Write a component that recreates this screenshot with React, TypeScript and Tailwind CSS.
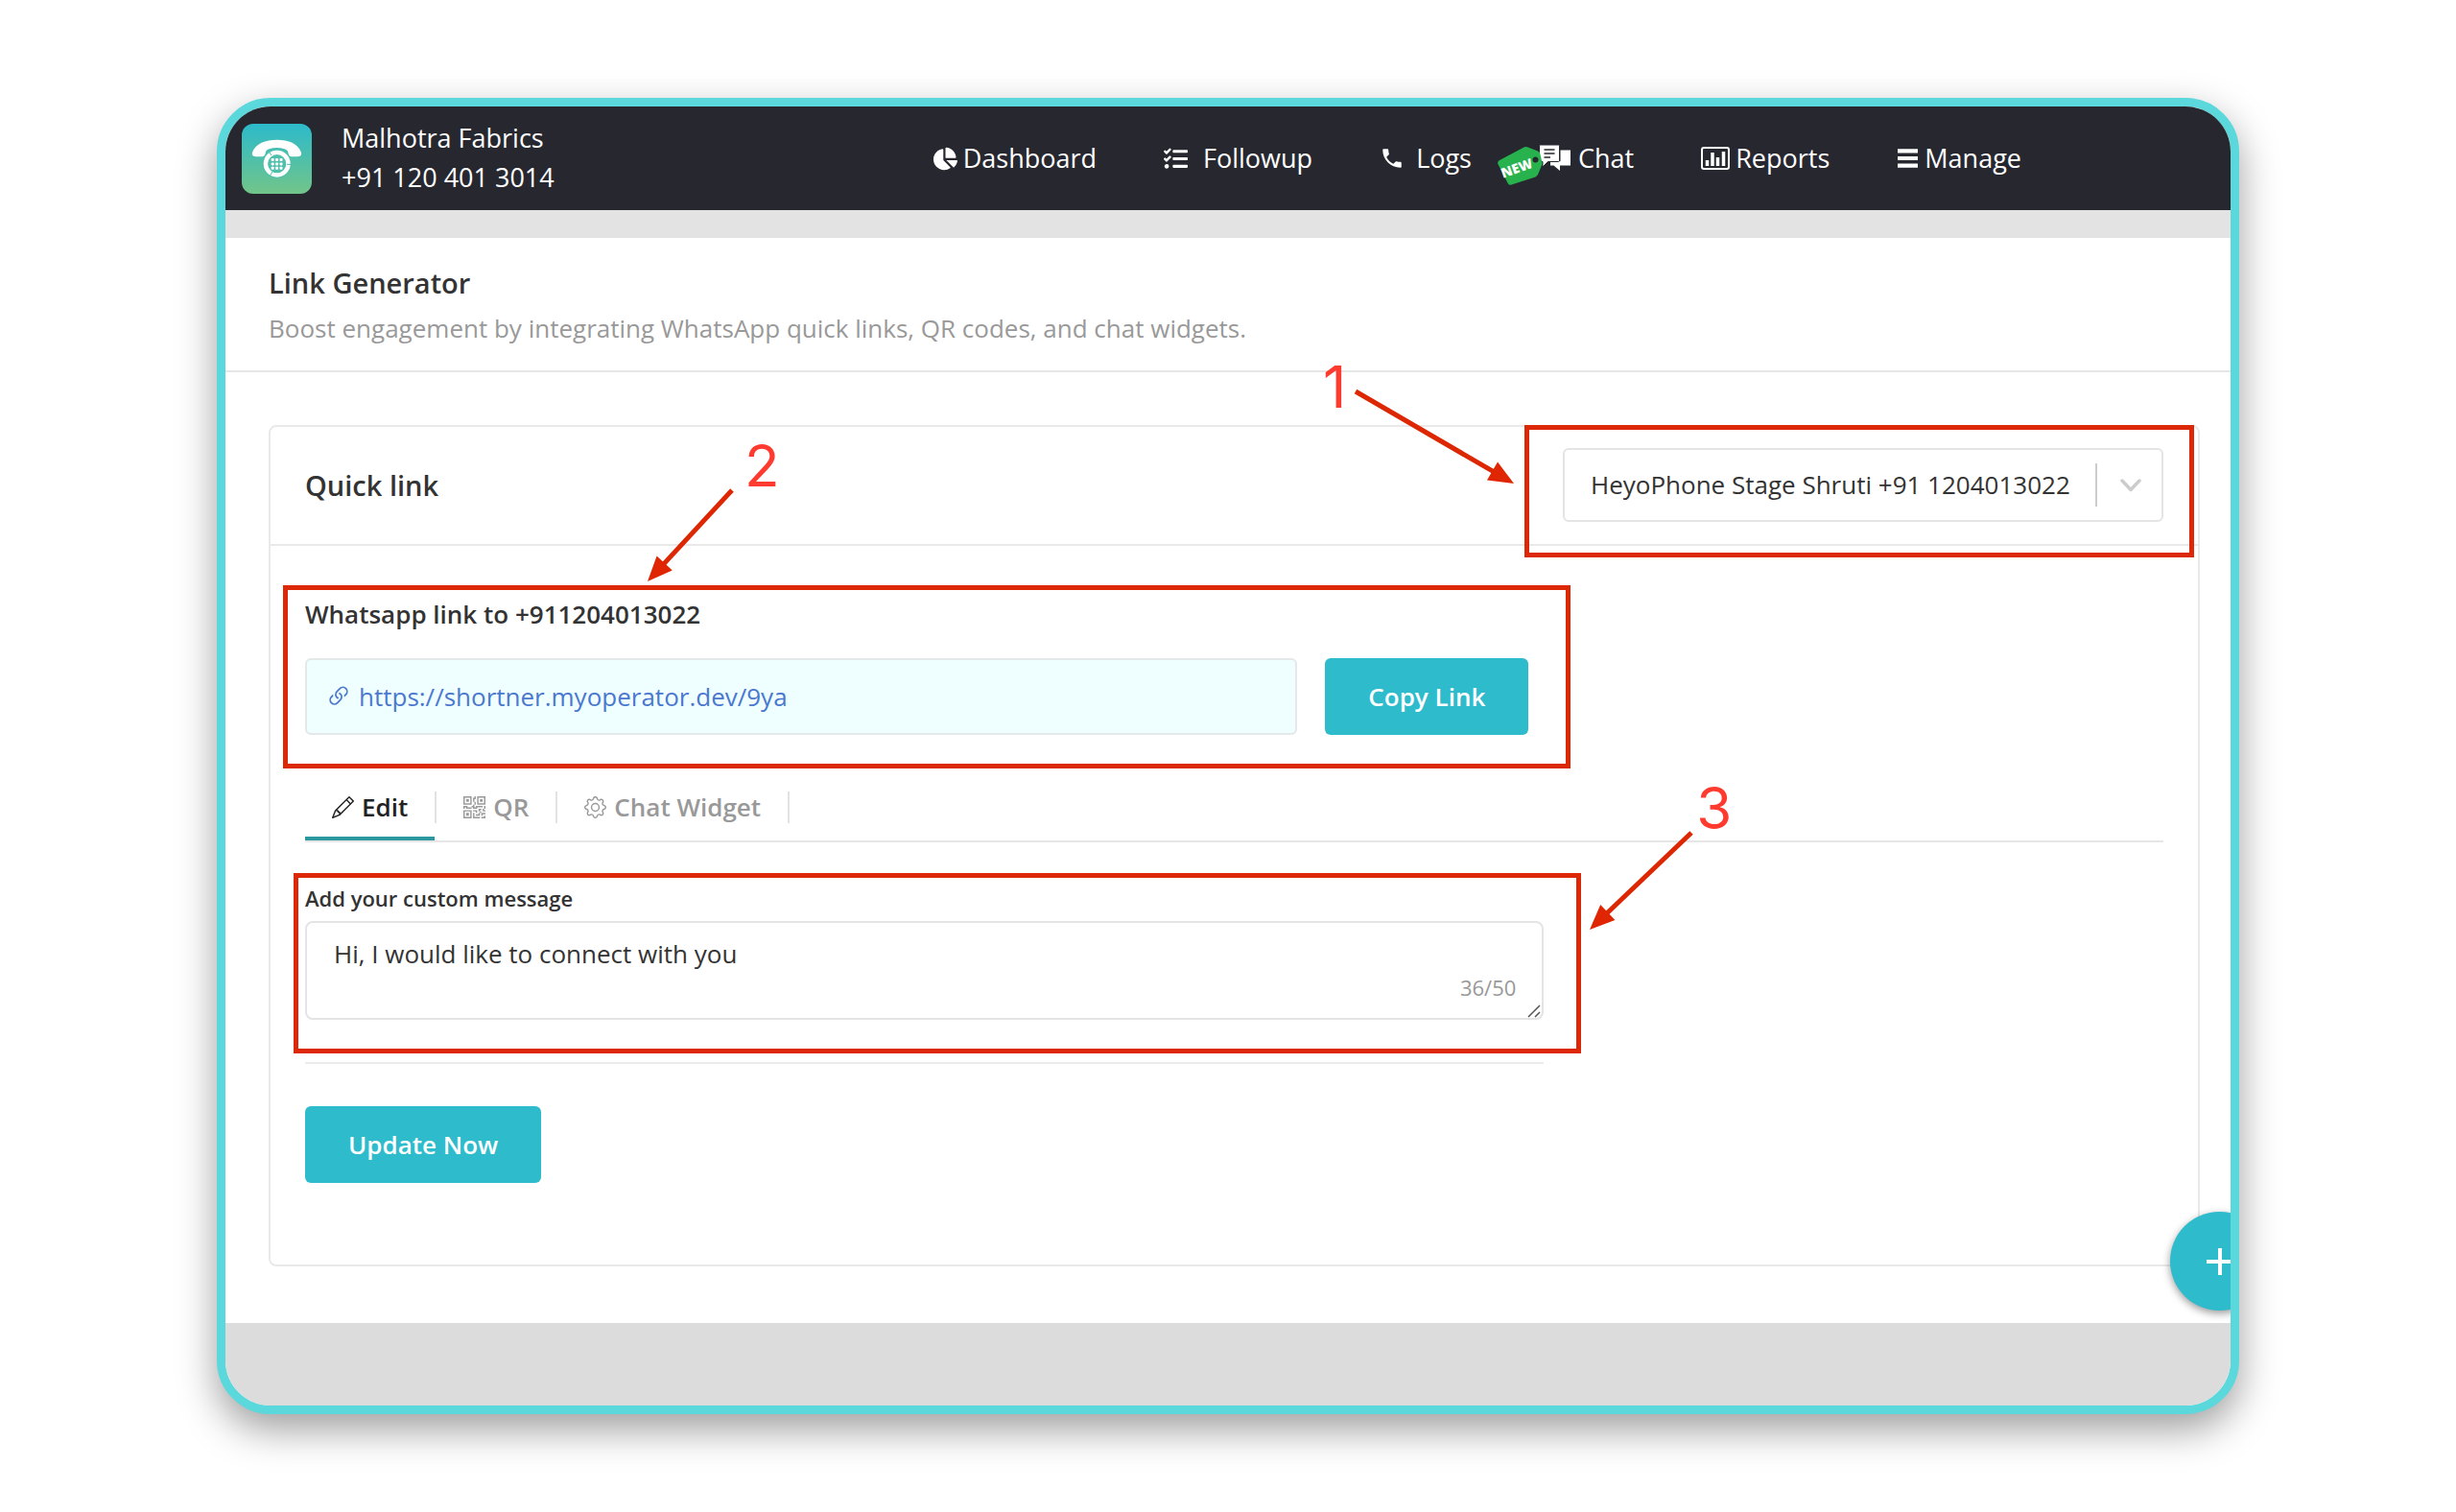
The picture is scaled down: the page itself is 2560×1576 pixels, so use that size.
import type { ReactNode } from 'react';
import { useState } from 'react';
import { BsGear, BsLink45Deg, BsPencil, BsQrCode } from 'react-icons/bs';
import { FaChartPie, FaTasks } from 'react-icons/fa';
import { IoMdCall } from 'react-icons/io';

function PhoneLogo() {
  return (
    <svg viewBox="0 0 73 73" className="size-[73px] shrink-0" aria-label="MyOperator">
      <defs>
        <linearGradient id="logo-fill" x1="0" y1="0" x2="0" y2="1">
          <stop offset="0" stopColor="#2cbacb" />
          <stop offset="1" stopColor="#72c589" />
        </linearGradient>
      </defs>
      <rect width="73" height="73" rx="12" fill="url(#logo-fill)" />
      <path
        d="M11 30C14 20.500 25 16.700 36.700 16.700S59 20.500 62 30C62.800 33.500 60.500 34.200 57 34.200H52C49.500 34.200 48.800 32.500 48.500 30.500C48.200 28 47 27 44.500 26.200C39.500 24.600 33.500 24.600 28.500 26.200C26 27 25 28 24.700 30.500C24.400 32.500 23.500 34.200 21 34.200H16C12.500 34.200 10.200 33.500 11 30Z"
        fill="#fff"
      />
      <circle cx="36.700" cy="41.700" r="15" fill="#4fc0ab" />
      <circle cx="36.700" cy="41.700" r="11.800" fill="#4fc0ab" stroke="#fff" strokeWidth="4.400" />
      <path d="M47 42.400h4M32 50l-2.500 4M31 33l-2-3" stroke="#4fc0ab" strokeWidth="1" />
      {[0, 1, 2].map((r) =>
        [0, 1, 2].map((c) => (
          <rect key={`${r}${c}`} x={30.7 + c * 4.4} y={36 + r * 4.4} width="3" height="3" rx="0.800" fill="#fff" />
        )),
      )}
    </svg>
  );
}

function ChatIcon() {
  return (
    <span className="relative flex h-7 w-[33px] shrink-0">
      <svg viewBox="0 0 33 28" className="h-7 w-[33px]">
        <path d="M22.500 5.500H33V21.500H22V27L15.500 21.500H12V17H22.500Z" fill="#fff" />
        <path
          d="M1.500 0H20.500Q21.500 0 21.500 1V16.500Q21.500 17.500 20.500 17.500H9.500L4 23V17.500H1.500Q.5 17.500 .5 16.500V1Q.5 0 1.500 0Z"
          fill="#fff"
          stroke="#27282f"
          strokeWidth="1"
        />
        <path d="M5.500 5H16.500M5.500 9H16.500M5.500 13H12" stroke="#27282f" strokeWidth="1.500" />
      </svg>
      <svg viewBox="0 0 50 42" className="absolute -left-[44px] top-px h-[42px] w-[50px]">
        <path
          d="M4 14.500L29 1.300Q30.500 .8 32 1.200L43 5.500Q45 6.500 45.400 8.500L47.500 18Q47.500 19.500 46.800 20.800L43 30Q42 31.500 40.500 32.400L15.500 40.600Q12.500 41.500 11.400 38.600L1.200 18.600Q.8 16 4 14.500Z"
          fill="#27b24e"
        />
        <circle cx="40.500" cy="14.500" r="3" fill="#27282f" />
        <text
          x="21"
          y="28"
          transform="rotate(-20 22 23)"
          textAnchor="middle"
          fontFamily="Open Sans, sans-serif"
          fontSize="14"
          fontWeight="800"
          fill="#fff"
        >
          NEW
        </text>
      </svg>
    </span>
  );
}

function ReportsIcon() {
  return (
    <svg viewBox="0 0 30 24" className="h-6 w-[30px] shrink-0">
      <rect x="1" y="1" width="28" height="22" rx="2" fill="none" stroke="#fff" strokeWidth="2" />
      <path d="M6.500 20V14M12 20V6M17.500 20V11M23.500 20V5" stroke="#fff" strokeWidth="3.500" />
    </svg>
  );
}

function MenuIcon() {
  return (
    <svg viewBox="0 0 23 20" className="h-5 w-[23px] shrink-0">
      <path d="M1 2.300H22M1 10H22M1 17.700H22" stroke="#fff" strokeWidth="4.200" strokeLinecap="butt" />
    </svg>
  );
}

function NavLink({ icon, label, gap }: { icon: ReactNode; label: string; gap: string }) {
  return (
    <a href="#" className={`flex items-center text-[27px] leading-10 ${gap}`}>
      {icon}
      {label}
    </a>
  );
}

function Arrow({ from, to }: { from: [number, number]; to: [number, number] }) {
  const angle = Math.atan2(to[1] - from[1], to[0] - from[0]);
  const at = (back: number, side: number) =>
    `${to[0] - back * Math.cos(angle) - side * Math.sin(angle)},${to[1] - back * Math.sin(angle) + side * Math.cos(angle)}`;
  const [neckX, neckY] = at(20, 0).split(',');
  return (
    <svg className="absolute top-0 left-0 size-1 overflow-visible">
      <line x1={from[0]} y1={from[1]} x2={neckX} y2={neckY} stroke="#dd2703" strokeWidth="5" />
      <polygon points={`${at(0, 0)} ${at(26, 11)} ${at(26, -11)}`} fill="#e02502" />
    </svg>
  );
}

function Callout({ place, children }: { place: string; children: ReactNode }) {
  return (
    <div className={`pointer-events-none absolute z-10 ${place}`}>
      <div className="absolute inset-0 border-5 border-[#dc2806]" />
      {children}
    </div>
  );
}

const numberClass = "absolute font-['Inter',sans-serif] text-[60px] leading-none text-[#ff3b30]";
const primaryButton = 'h-20 shrink-0 rounded-md bg-[#2ebbcc] px-[45px] text-[26px] font-semibold text-white';

const tabs = [
  { label: 'Edit', icon: BsPencil },
  { label: 'QR', icon: BsQrCode },
  { label: 'Chat Widget', icon: BsGear },
];

export default function App() {
  const [active, setActive] = useState('Edit');
  const [message, setMessage] = useState('Hi, I would like to connect with you');

  return (
    <div className="min-h-screen bg-white px-[226px] py-[102px] font-['Open_Sans',sans-serif] text-[#333]">
      <div className="relative overflow-hidden rounded-[56px] border-9 border-[#5ad8dc] bg-white shadow-[0_16px_40px_rgba(0,0,0,0.38)]">
        <header className="flex h-[108px] items-center bg-[#27282f] pr-[218px] pl-[17px] text-white">
          <PhoneLogo />
          <div className="ml-[31px] pb-0.5 text-[27px] leading-[41px]">
            <p>Malhotra Fabrics</p>
            <p>+91 120 401 3014</p>
          </div>
          <nav className="ml-auto flex items-center gap-[70px]">
            <NavLink label="Dashboard" gap="gap-1.5" icon={<FaChartPie className="size-[25px]" />} />
            <NavLink label="Followup" gap="gap-4" icon={<FaTasks className="size-[25px]" />} />
            <NavLink label="Logs" gap="gap-3" icon={<IoMdCall className="size-[26px]" />} />
            <NavLink label="Chat" gap="gap-2" icon={<ChatIcon />} />
            <NavLink label="Reports" gap="gap-1.5" icon={<ReportsIcon />} />
            <NavLink label="Manage" gap="gap-1.5" icon={<MenuIcon />} />
          </nav>
        </header>
        <div className="h-[29px] bg-[#e3e3e3]" />

        <div className="border-b-2 border-[#e6e6e6] pt-6 pb-5 pl-[45px]">
          <h1 className="text-[29px] leading-[46px] font-semibold">Link Generator</h1>
          <p className="text-[26px] leading-[48px] text-[#999]">
            Boost engagement by integrating WhatsApp quick links, QR codes, and chat widgets.
          </p>
        </div>

        <main className="pt-[55px] pr-8 pb-[59px] pl-[45px]">
          <section className="rounded-lg border-2 border-[#e9e9e9]">
            <div className="flex items-center justify-between border-b-2 border-[#e9e9e9] pt-[22px] pr-9 pb-[23px] pl-9">
              <h2 className="text-[29px] font-semibold">Quick link</h2>
              <div className="relative w-[626px]">
                <select
                  aria-label="Phone number"
                  className="h-[77px] w-full appearance-none rounded-md border-2 border-[#e4e4e4] bg-white pl-[27px] text-[26px]"
                >
                  <option>HeyoPhone Stage Shruti +91 1204013022</option>
                </select>
                <div className="pointer-events-none absolute inset-y-4 right-0 flex w-[71px] items-center justify-center border-l-2 border-[#ccc]">
                  <svg viewBox="0 0 22 14" className="h-3.5 w-[22px]">
                    <path d="M2 2L11 11.500L20 2" fill="none" stroke="#ccc" strokeWidth="3.500" strokeLinecap="round" strokeLinejoin="round" />
                  </svg>
                </div>
                <Callout place="-top-6 -right-8 -bottom-[37px] -left-[40px]">
                  <Arrow from={[-176, -35]} to={[-11, 61]} />
                  <span className={`${numberClass} -top-[70px] -left-[210px]`}>1</span>
                </Callout>
              </div>
            </div>

            <div className="pt-[51px] pr-9 pb-[85px] pl-9">
              <div className="w-2/3 pr-4">
                <div className="relative">
                  <h3 className="text-[26px] leading-10 font-semibold">Whatsapp link to +911204013022</h3>
                  <div className="mt-[26px] flex gap-[29px]">
                    <div className="flex flex-1 items-center rounded-md border-2 border-[#e4e8e8] bg-[#effeff] pl-[19px] text-[26px] text-[#4a78cf]">
                      <a href="https://shortner.myoperator.dev/9ya" className="flex items-center gap-[7px]">
                        <BsLink45Deg className="size-7" />
                        https://shortner.myoperator.dev/9ya
                      </a>
                    </div>
                    <button type="button" className={primaryButton}>
                      Copy Link
                    </button>
                  </div>
                  <Callout place="-top-2.5 -right-11 -bottom-[35px] -left-[23px]">
                    <Arrow from={[468, -99]} to={[380, -4]} />
                    <span className={`${numberClass} -top-[155px] left-[481px]`}>2</span>
                  </Callout>
                </div>
              </div>

              <div role="tablist" className="mt-[59px] flex border-b-2 border-[#e6e6e6] text-[26px] font-semibold">
                {tabs.map(({ label, icon: Icon }) => (
                  <div key={label} className="flex">
                    <button
                      type="button"
                      role="tab"
                      aria-selected={active === label}
                      onClick={() => setActive(label)}
                      className={`flex items-center gap-2 border-b-4 px-7 pb-3.5 leading-[33px] ${
                        active === label ? 'border-[#2b979f] text-[#222]' : 'border-transparent text-[#999]'
                      }`}
                    >
                      <Icon className="size-[23px]" />
                      {label}
                    </button>
                    <span className="h-[33px] w-0.5 bg-[#e2e2e2]" />
                  </div>
                ))}
              </div>

              <div className="w-2/3">
                <div className="relative mt-[42px]">
                  <label htmlFor="message" className="block text-[22px] leading-8 font-semibold">
                    Add your custom message
                  </label>
                  <div className="relative mt-2">
                    <textarea
                      id="message"
                      value={message}
                      onChange={(e) => setMessage(e.target.value)}
                      className="block h-[103px] w-full resize-none rounded-lg border-2 border-[#e4e4e4] px-7 pt-3.5 text-[26px] leading-9"
                    />
                    <span className="absolute right-[29px] bottom-[18px] text-[22px] leading-8 text-[#999]">
                      {message.length}/50
                    </span>
                    <svg viewBox="0 0 14 14" className="absolute right-[3px] bottom-[2px] size-3.5">
                      <path d="M1 13L13 1M8 13L13 8" stroke="#555" strokeWidth="1.500" />
                    </svg>
                  </div>
                  <Callout place="-top-2.5 -right-[39px] -bottom-[35px] -left-3">
                    <div className="absolute top-0 left-full">
                      <Arrow from={[115, -42]} to={[9, 59]} />
                      <span className={`${numberClass} -top-[98px] left-[120px]`}>3</span>
                    </div>
                  </Callout>
                </div>
                <hr className="my-11 border-t-2 border-[#ebebeb]" />
                <button type="button" className={primaryButton}>
                  Update Now
                </button>
              </div>
            </div>
          </section>
        </main>

        <footer className="h-[86px] bg-[#dcdcdc]" />

        <button
          type="button"
          aria-label="Add"
          className="absolute -right-10 bottom-[99px] flex size-[103px] items-center justify-center rounded-full bg-[#2ebbcc] shadow-[0_3px_8px_rgba(0,0,0,0.4)]"
        >
          <svg viewBox="0 0 28 28" className="size-7">
            <path d="M14 0V28M0 14H28" stroke="#fff" strokeWidth="4" />
          </svg>
        </button>
      </div>
    </div>
  );
}
